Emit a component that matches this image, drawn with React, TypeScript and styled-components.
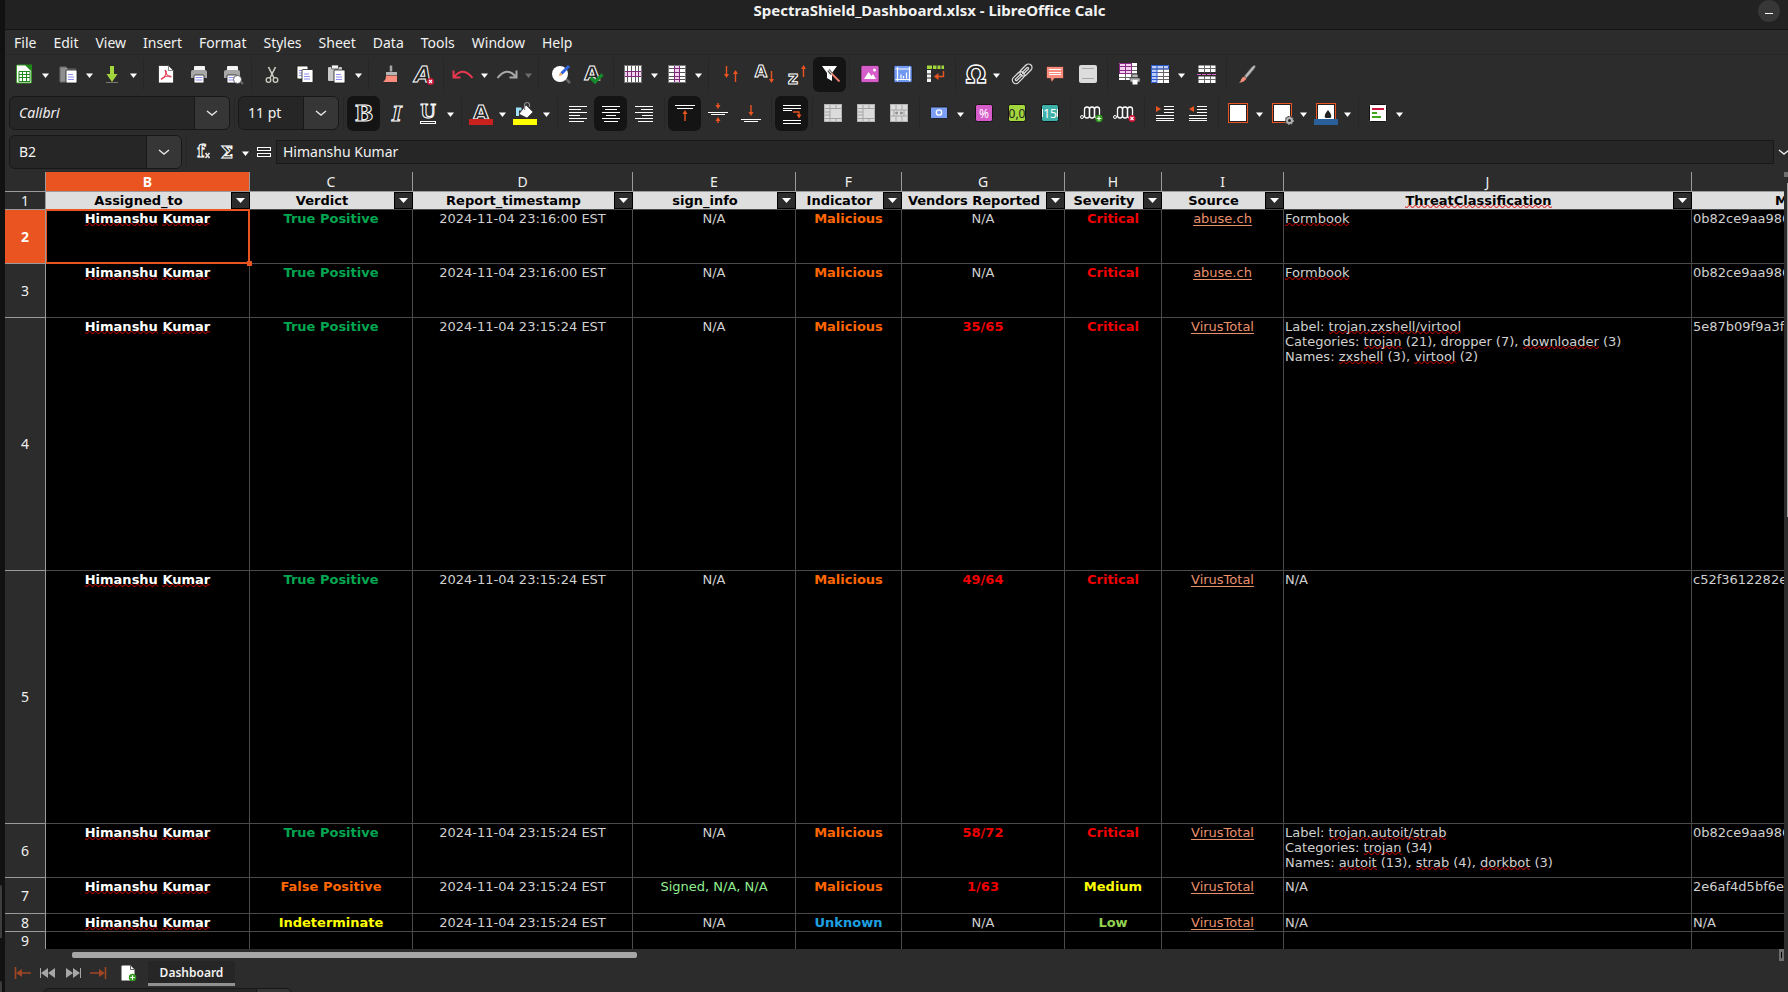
import React from "react";
import styled, { createGlobalStyle, css } from "styled-components";

const ui = `"Noto Sans", "Open Sans", sans-serif`;
const sheet = `"DejaVu Sans", Verdana, sans-serif`;
const orange = "#e95420";
const wave = `url("data:image/svg+xml,%3Csvg xmlns='http://www.w3.org/2000/svg' width='6' height='4'%3E%3Cpath d='M-1.500 0L1.500 3L4.500 0L7.500 3' fill='none' stroke='%23e00000' stroke-width='1'/%3E%3C/svg%3E")`;

const GlobalStyle = createGlobalStyle`
  * { box-sizing: border-box; }
  body { margin: 0; background: #2c2c2c; color: #f2f2f2; font: 14px/20px ${ui}; overflow-x: hidden; }
  button, input { font: inherit; color: inherit; background: none; border: 0; padding: 0; margin: 0; outline: 0; }
  svg { overflow: visible; }
`;

/* ---------- window frame ---------- */
const Desktop = styled.div`
  display: flex;
  min-height: 100vh;
`;
const Edge = styled.div`
  flex: 0 0 5px;
  background: #111;
  display: flex;
  flex-direction: column;
  justify-content: flex-end;
  gap: 43px;
`;
const EdgeItem = styled.span<{ $h: number }>`
  width: 2px;
  height: ${(p) => p.$h}px;
  background: #3d3d3d;
  border-radius: 0 3px 0 0;
`;
const Window = styled.main`
  flex: 1;
  min-width: 0;
  display: flex;
  flex-direction: column;
`;
const TitleBar = styled.header`
  height: 30px;
  display: flex;
  background: #222;
  border-bottom: 1px solid #151515;
  padding: 0 8px 0 96px;
`;
const Title = styled.h1`
  flex: 1;
  margin: 0;
  text-align: center;
  font: 700 15px/20px ${ui};
`;
const Minimise = styled.button`
  width: 22px;
  height: 22px;
  border-radius: 11px;
  background: #373737;
  display: flex;
  justify-content: center;
  &::after { content: ""; width: 8px; height: 1px; margin-top: 13px; background: #fff; }
`;
const MenuBar = styled.nav`
  height: 25px;
  display: flex;
  align-items: center;
  gap: 17px;
  padding: 2px 9px 0;
  border-bottom: 1px solid #272727;
`;
const MenuItem = styled.button`
  line-height: 20px;
`;

/* ---------- toolbars ---------- */
const Toolbar = styled.div<{ $h: number; $pad: number }>`
  height: ${(p) => p.$h}px;
  display: flex;
  align-items: center;
  padding-left: ${(p) => p.$pad}px;
`;
const Tool = styled.button<{ $on?: boolean; $narrow?: boolean; $gap?: number }>`
  flex: none;
  width: ${(p) => (p.$narrow ? 31 : 33)}px;
  height: 35px;
  margin-left: ${(p) => p.$gap || 0}px;
  border-radius: 6px;
  display: flex;
  align-items: center;
  justify-content: center;
  ${(p) => p.$on && css`background: #141414;`}
`;
const FormulaTool = styled(Tool)`
  width: 24px;
`;
const Drop = styled.button<{ $dim?: boolean }>`
  flex: none;
  width: 13px;
  height: 35px;
  display: flex;
  align-items: center;
  justify-content: center;
  color: ${(p) => (p.$dim ? "#6c6c6c" : "#fff")};
`;
const Sep = styled.span<{ $w: number }>`
  flex: none;
  width: ${(p) => p.$w}px;
  height: 32px;
  display: flex;
  justify-content: center;
  &::after { content: ""; width: 1px; background: #262626; }
`;
const Combo = styled.div<{ $w: number }>`
  flex: none;
  width: ${(p) => p.$w}px;
  height: 34px;
  display: flex;
  background: #262626;
  border: 1px solid #181818;
  border-radius: 6px;
  overflow: hidden;
`;
const ComboInput = styled.input<{ $italic?: boolean }>`
  flex: 1;
  min-width: 0;
  padding-left: 9px;
  font-style: ${(p) => (p.$italic ? "italic" : "normal")};
`;
const ComboButton = styled.button`
  flex: none;
  width: 35px;
  display: flex;
  align-items: center;
  justify-content: center;
  background: #363636;
  border-left: 1px solid #181818;
`;
const FormulaInput = styled.input`
  flex: 1;
  min-width: 0;
  height: 24px;
  padding: 0 0 1px 6px;
  background: #262626;
  border: 1px solid #181818;
`;
const Expand = styled.button`
  flex: none;
  width: 14px;
  overflow: hidden;
  display: flex;
  padding-left: 4px;
`;

/* ---------- grid ---------- */
const SheetArea = styled.div`
  display: flex;
  margin-top: 1px;
`;
const Viewport = styled.div`
  flex: 1;
  min-width: 0;
  overflow: hidden;
`;
const Grid = styled.table`
  width: 1905px;
  table-layout: fixed;
  border-collapse: separate;
  border-spacing: 0;
  font: 13px/15px ${sheet};
  color: #d0d0d0;
`;
const ColHead = styled.th<{ $sel?: boolean }>`
  height: 20px;
  padding: 0;
  font: ${(p) => (p.$sel ? 700 : 400)} 14px/18px ${ui};
  color: ${(p) => (p.$sel ? "#fff" : "#f0f0f0")};
  background: ${(p) => (p.$sel ? orange : "#2c2c2c")};
  border-right: 1px solid #9a9a9a;
  border-bottom: 1px solid #9a9a9a;
`;
const Corner = styled.td`
  background: #2c2c2c;
  border-right: 1px solid #9a9a9a;
  border-bottom: 1px solid #9a9a9a;
`;
const RowHead = styled.th<{ $sel?: boolean; $last?: boolean }>`
  padding: 0;
  font: ${(p) => (p.$sel ? 700 : 400)} 14px/16px ${ui};
  color: ${(p) => (p.$sel ? "#fff" : "#f0f0f0")};
  background: ${(p) => (p.$sel ? orange : "#2c2c2c")};
  border-right: 1px solid #9a9a9a;
  border-bottom: ${(p) => (p.$last ? 0 : 1)}px solid #9a9a9a;
`;
const Row = styled.tr<{ $h: number }>`
  height: ${(p) => p.$h}px;
`;
const FieldCell = styled.th`
  padding: 0;
  height: 18px;
  background: #dedede;
  border-bottom: 1px solid #4a4a4a;
`;
const Field = styled.div`
  display: flex;
  height: 17px;
  color: #000;
  line-height: 18px;
`;
const FieldName = styled.span`
  flex: 1;
  text-align: center;
  white-space: nowrap;
`;
const FilterButton = styled.button`
  width: 19px;
  height: 17px;
  background: #2c2c2c;
  border: 1px solid #000;
  display: flex;
  align-items: center;
  justify-content: center;
`;
const Cell = styled.td<{ $c?: string; $bold?: boolean; $left?: boolean; $last?: boolean }>`
  position: relative;
  padding: 1px 0 0 ${(p) => (p.$left ? 1 : 0)}px;
  vertical-align: top;
  white-space: nowrap;
  background: #000;
  text-align: ${(p) => (p.$left ? "left" : "center")};
  color: ${(p) => p.$c || "inherit"};
  font-weight: ${(p) => (p.$bold ? 700 : 400)};
  border-right: 1px solid #4a4a4a;
  border-bottom: ${(p) => (p.$last ? 0 : 1)}px solid #4a4a4a;
`;
const Cursor = styled.span`
  position: absolute;
  z-index: 1;
  inset: -1px -1px -1px 0;
  border: 2px solid ${orange};
  border-left-width: 1px;
  &::after {
    content: "";
    position: absolute;
    right: -4px;
    bottom: -4px;
    width: 5px;
    height: 5px;
    background: ${orange};
  }
`;
const Typo = styled.span`
  padding-bottom: 1px;
  background: ${wave} left bottom / 6px 4px repeat-x;
`;
const Link = styled.a`
  color: #e8906c;
  text-underline-offset: 2px;
`;
const VScroll = styled.div`
  flex: none;
  width: 4px;
  display: flex;
  flex-direction: column;
`;
const VSplit = styled.span`
  height: 5px;
  margin-bottom: 6px;
  background: #6e6e6e;
`;
const VThumb = styled.span`
  height: 334px;
  width: 1px;
  align-self: flex-end;
  background: #a6a6a6;
`;
const HScroll = styled.div`
  height: 12px;
  display: flex;
  justify-content: space-between;
  padding: 0 4px 0 67px;
`;
const HThumb = styled.span`
  width: 33%;
  height: 6px;
  margin-top: 3px;
  border-radius: 2px;
  background: #a6a6a6;
`;
const HSplit = styled.span`
  width: 5px;
  background: #6e6e6e;
  display: flex;
  align-items: center;
  justify-content: center;
  &::after { content: ""; width: 1px; height: 6px; background: #000; }
`;

/* ---------- sheet tabs and find bar ---------- */
const TabBar = styled.div`
  height: 27px;
  display: flex;
  align-items: flex-start;
  padding-left: 5px;
`;
const NavButton = styled.button`
  width: 25px;
  height: 24px;
  display: flex;
  align-items: center;
  justify-content: center;
`;
const AddSheet = styled(NavButton)`
  width: 24px;
  margin: 0 7px;
`;
const Tab = styled.button`
  width: 87px;
  height: 25px;
  background: #262626;
  border-bottom: 3px solid #919191;
  font: 600 12px/24px ${ui};
`;
const FindBar = styled.div`
  flex: 1 0 4px;
  height: 4px;
  overflow: hidden;
  padding-left: 38px;
`;

/* ---------- icons ---------- */
const Svg = ({ children, w = 24, h = 24 }: { children: React.ReactNode; w?: number; h?: number }) => (
  <svg width={w} height={h} viewBox={`0 0 ${w} ${h}`} fill="none" aria-hidden="true">{children}</svg>
);
const Caret = () => <Svg w={9} h={9}><path d="M1 3.500h7L4.500 8z" fill="currentColor" /></Svg>;
const Chevron = () => <Svg w={12} h={12}><path d="M1 4l5 4 5-4" stroke="#e6e6e6" strokeWidth="1.400" /></Svg>;
const Glyph = ({ x, y, s, children, it, f = "DejaVu Serif", w = 1 }: any) => (
  <text x={x} y={y} fontSize={s} fontWeight="700" fontStyle={it ? "italic" : "normal"} fontFamily={`"${f}", serif`} textAnchor="middle" stroke="#fff" strokeWidth={w} fill="#222">{children}</text>
);
const Arrow = ({ x, y1, y2 }: { x: number; y1: number; y2: number }) => {
  const d = y2 > y1 ? -4 : 4;
  return <><path d={`M${x} ${y1}V${y2 + d / 2}`} stroke={orange} strokeWidth="1.400" /><path d={`M${x - 2.5} ${y2 + d}L${x} ${y2}l2.500 ${d}z`} fill={orange} /></>;
};
const Lines = ({ rows, c = "#fff" }: { rows: number[][]; c?: string }) => (
  <path d={rows.map(([x, y, w]) => `M${x} ${y + 0.5}h${w}`).join("")} stroke={c} strokeWidth="1" />
);
const Page = ({ x = 0, y = 0 }) => (
  <g transform={`translate(${x} ${y})`}>
    <rect width="11" height="13" rx="1" fill="#fff" stroke="#1c1c1c" strokeWidth=".8" />
    <path d="M2 4.500h5M2 7h6M2 9.500h6" stroke="#8f8ff0" strokeWidth="1.200" />
  </g>
);
const Printer = () => (
  <>
    <rect x="7" y="4" width="11" height="5" rx="1" fill="#f4f4f4" />
    <path d="M4 10q0-2 2-2h12q2 0 2 2v6h-16z" fill="#a8a8a8" />
    <rect x="7" y="13" width="10" height="8" rx="1" fill="#fff" stroke="#222" strokeWidth=".8" />
    <path d="M8.500 15.500h7M8.500 18h7" stroke="#8f8ff0" strokeWidth="1.200" />
  </>
);
const Cross = ({ x, y }: { x: number; y: number }) => (
  <><circle cx={x} cy={y} r="3.500" fill="#d0163a" /><path d={`M${x - 1.5} ${y - 1.5}l3 3m0-3l-3 3`} stroke="#fff" strokeWidth="1.100" /></>
);
const Plus = ({ x, y }: { x: number; y: number }) => (
  <><circle cx={x} cy={y} r="3.700" fill="#2f9a1c" /><path d={`M${x - 2.3} ${y}h4.600M${x} ${y - 2.3}v4.600`} stroke="#fff" strokeWidth="1.200" /></>
);
const Merge = ({ mid }: { mid?: boolean }) => (
  <>
    <rect x="3" y="3" width="18" height="18" fill="#dcdcdc" />
    <path d={mid ? "M3 9h18M3 15h18M9 3v6M15 3v6M9 15v6M15 15v6M7 9v6M17 9v6" : "M3 7.500h18M3 11h6M3 14h6M3 17.500h18M9 3v18M15 3v4M15 18v3"} stroke="#a4a4a4" />
    {mid && <path d="M8 12h3m2 0h3M10 10.500v3M14 10.500v3" stroke="#8d8d8d" strokeWidth="1.300" />}
    <rect x="3.500" y="3.500" width="17" height="17" stroke="#b4b4b4" />
  </>
);
const GridBase = ({ hl }: { hl: "row" | "col" }) => (
  <>
    <rect x="3" y="3" width="18" height="18" fill="#fff" />
    {hl === "row" ? <rect x="3" y="9" width="18" height="6" fill="#f4d0f0" /> : <rect x="9" y="3" width="6" height="18" fill="#f4d0f0" />}
    <path d={hl === "row" ? "M6.500 3v18M10.500 3v18M14.500 3v18M17.500 3v18" : "M3 6.500h18M3 10.500h18M3 14.500h18M3 17.500h18"} stroke="#555" />
    <path d={hl === "row" ? "M3 9.500h18M3 14.500h18M6.500 9v6M10.500 9v6M14.500 9v6M17.500 9v6" : "M9.500 3v18M14.500 3v18M9 6.500h6M9 10.500h6M9 14.500h6M9 17.500h6"} stroke="#7c2a78" />
    <rect x="3.500" y="3.500" width="17" height="17" stroke="#777" />
  </>
);
const Indent = ({ dec }: { dec?: boolean }) => (
  <>
    <path d={dec ? "M8 5v6L3 8z" : "M3 5v6l5-3z"} fill={orange} />
    <Lines rows={[[11, 5, 10], [11, 8, 10], [11, 11, 10], [3, 14, 18], [3, 17, 18], [3, 19, 18]]} />
  </>
);
const Swatch = ({ bg, children, c }: any) => (
  <>
    <rect x="3.500" y="3.500" width="17" height="17" rx="2" fill={bg} stroke="#141414" />
    <text x="12" y="16.500" fontSize="12" textAnchor="middle" fontFamily='"Noto Sans", sans-serif' fill={c}>{children}</text>
  </>
);
const Decimal = () => (
  <>
    <circle cx="3" cy="16" r="1.500" stroke="#fff" />
    {[5.5, 10.5, 15.5].map((x) => (
      <rect key={x} x={x} y="6" width="5" height="11" rx="2.500" stroke="#fff" strokeWidth="1.300" />
    ))}
  </>
);
const Bordered = ({ children }: { children?: React.ReactNode }) => (
  <><rect x="2.500" y="2.500" width="19" height="19" fill="#222" stroke={orange} /><rect x="4" y="4" width="16" height="16" fill="#fff" />{children}</>
);

const icons: Record<string, React.ReactNode> = {
  new: <><path d="M4.500 4q0-1 1-1h8l6 6v11q0 1-1 1h-13q-1 0-1-1z" fill="#fff" stroke="#3a9a2a" /><path d="M13 2.500h7v7z" fill="#1f8a1a" /><path d="M7 9.500h11v10h-11zM7 12.500h11M7 15.500h11M10.500 9.500v10M14.500 9.500v10" stroke="#1f8a1a" /></>,
  open: <><path d="M4 5h6l2 2h8v13h-16z" fill="#8f8f8f" stroke="#6a6a6a" /><Page x={10} y={8} /></>,
  save: <><path d="M10 4h4v8h3.500L12 20l-5.500-8h3.500z" fill="#a2d63c" /><path d="M6 20.500h12" stroke="#777" /></>,
  pdf: <><path d="M4.500 3.500h10l5 5v12.500h-15z" fill="#fff" stroke="#1c1c1c" strokeWidth=".7" /><path d="M14.500 3.500v5h5" stroke="#666" strokeWidth=".8" /><path d="M11 8q2 0 .8 4Q10 17 7.500 17.500 6 17 9 15.500q4-2 7.500-1.500 2 1-.5 1Q12.500 14.500 11 8z" stroke="#e2304a" strokeWidth="1" /></>,
  print: <Printer />,
  preview: <><Printer /><path d="M19 18l4 4" stroke="#6b6b6b" strokeWidth="2" /><circle cx="17.500" cy="17.500" r="4" fill="#fff" stroke="#333" strokeWidth=".7" /></>,
  cut: <><path d="M8.500 5l5.500 11M15.500 5L10 16" stroke="#cfcfc6" strokeWidth="1.600" /><circle cx="8.500" cy="18" r="2.300" stroke="#cfcfc6" strokeWidth="1.300" /><circle cx="15.500" cy="18" r="2.300" stroke="#cfcfc6" strokeWidth="1.300" /></>,
  copy: <><Page x={4} y={4} /><Page x={9} y={7.5} /></>,
  paste: <><rect x="3" y="5" width="14" height="14" rx="1" fill="#c9c9c9" /><rect x="6.500" y="3" width="7" height="4" rx="1" fill="#f4f4f4" stroke="#333" strokeWidth=".8" /><Page x={9} y={8} /></>,
  clone: <><path d="M12 3.500v6" stroke="#a6a6a6" strokeWidth="2.500" /><path d="M7 13v-3h11v3z" fill="#b5b5b5" /><path d="M7 13.500h11V20H4q3-2 3-6.500z" fill="#fc8d7c" /></>,
  clear: <><Glyph x={11} y={20} s={22} it f="DejaVu Sans">A</Glyph><Cross x={18.5} y={19.5} /></>,
  undo: <path d="M2.500 8.500v7h7M3 15Q12 4 21.500 16" stroke="#e8384f" strokeWidth="2" />,
  redo: <path d="M21.500 8.500v7h-7M21 15Q12 4 2.500 16" stroke="#a8a8a8" strokeWidth="2" />,
  find: <><path d="M17 17l4 4" stroke="#666" strokeWidth="2.500" /><circle cx="11" cy="12" r="8" fill="#fff" /><path d="M12.500 11.500L20 4" stroke="#2f62dc" strokeWidth="3" /><path d="M10 14l1-3.500 2.500 2.500z" fill="#f09a50" /></>,
  spell: <><Glyph x={10} y={18} s={20} f="DejaVu Sans">A</Glyph><path d="M8.500 15.500l4.500 4.500 7.500-7.500" stroke="#148a2c" strokeWidth="3.200" /></>,
  rows: <GridBase hl="row" />,
  cols: <GridBase hl="col" />,
  sort: <><Arrow x={7.5} y1={4} y2={16} /><Arrow x={16.5} y1={20} y2={8} /></>,
  asc: <><Glyph x={9} y={14.5} s={16} f="DejaVu Sans">A</Glyph><Arrow x={19.5} y1={9} y2={21} /></>,
  desc: <><Glyph x={8} y={21.5} s={18} f="DejaVu Sans">z</Glyph><Arrow x={18.5} y1={15} y2={3} /></>,
  filter: <><path d="M4 4h15l-5 7v8l-5-3v-5z" fill="#fff" /><path d="M10.500 8l3 4" stroke="#555" strokeWidth="3" /><path d="M10.500 8l3.500 4" stroke="#fff" strokeWidth="1" /><path d="M13.500 11.500l8 8" stroke="#f08070" strokeWidth="1.800" /></>,
  image: <><rect x="3" y="3.500" width="18" height="17" rx="1.500" fill="#d65cca" stroke="#141414" strokeWidth=".6" /><path d="M6 17l4.500-7 3 4 1.500-2 3 5z" fill="#fff" /><circle cx="16.500" cy="8" r="1.500" fill="#fff" /></>,
  chart: <><rect x="3" y="3.500" width="18" height="17" rx="1.500" fill="#7199f2" stroke="#141414" strokeWidth=".6" /><path d="M4.500 7h15M4.500 17.500h15M6.500 5v14M18.500 5v14M10 12.500v4M12.500 14v2.500M15.500 10.500v6" stroke="#fff" strokeWidth="1.200" /></>,
  pivot: <><path d="M3 3.500h5v3.500h-5zM9 3.500h3.500v3.500h-3.500zM13.500 3.500h3v3.500h-3zM17.500 3.500h2.500v3.500h-2.500z" fill="#a2d63c" /><path d="M3 8h4v3.500h-4zM3 12.500h4v3h-4zM3 16.500h4v3.500h-4z" fill="#f2f2f2" /><path d="M19.500 9v5.500H13" stroke={orange} strokeWidth="1.400" /><path d="M14.500 11v7l-4.500-3.500z" fill={orange} /></>,
  omega: <Glyph x={13} y={21} s={24} f="DejaVu Sans" w={1.3}>Ω</Glyph>,
  link: <g stroke="#dcdcdc" strokeWidth="1.300"><rect x="-6.500" y="-3.500" width="14" height="7" rx="3.500" transform="translate(8 16) rotate(-45)" /><rect x="-4" y="-1" width="8" height="2" rx="1" transform="translate(8.500 15.500) rotate(-45)" /><rect x="-7" y="-3.500" width="14" height="7" rx="3.500" transform="translate(16 8) rotate(-45)" /><rect x="-4" y="-1" width="8" height="2" rx="1" transform="translate(15.500 8.500) rotate(-45)" /></g>,
  comment: <><path d="M3.500 4.500h17v12h-9l-3 4-1-4h-4z" fill="#fc8d7c" stroke="#1c1c1c" strokeWidth=".6" /><Lines rows={[[6, 7, 12], [6, 10, 12], [6, 12, 12]]} /></>,
  header: <><rect x="3" y="3" width="18" height="18" rx="2" fill="#dcdcdc" /><Lines rows={[[6, 6, 12], [6, 16, 12]]} c="#a8a8a8" /></>,
  range: <><path d="M3 1h18v17h-18z" fill="#fff" /><path d="M3 1h12v10h-12z" fill="#f4d0f0" /><path d="M3 4.500h18M3 8.500h18M3 11.500h18M3 15.500h18M9.500 1v17M15.500 1v17" stroke="#666" /><path d="M3.500 1.500h12v10h-12zM3.500 4.500h12M3.500 8.500h12M9.500 1v10" stroke="#8a2a84" /><path d="M14 16h10v4h-10zM16 12.500h6v3h-6z" fill="#b5b5b5" stroke="#333" strokeWidth=".6" /><rect x="16.500" y="18" width="5" height="4.500" fill="#fff" /></>,
  freeze: <><path d="M3 3h18v18h-18z" fill="#fff" /><path d="M3 3h6v18h-6zM9 3h12v4h-12z" fill="#b9ccfa" /><path d="M3 7h18M3 10.500h18M3 14.500h18M3 17.500h18M15.500 3v18" stroke="#666" /><path d="M3.500 3.500h17v3.500h-17zM3.500 3.500h5.500v17h-5.500zM3 10.500h6M3 14.500h6M3 17.500h6" stroke="#2f5bd0" /></>,
  split: <><path d="M3.500 3.500h17v6.500h-17zM3.500 14.500h17v6.500h-17z" fill="#fff" /><path d="M3 6.500h18M3 17.500h18M9.500 3v7.500M15.500 3v7.500M9.500 14v7M15.500 14v7" stroke="#666" /><path d="M2 12.500h20" stroke="#e060c8" strokeWidth="1.200" strokeDasharray="4 1" /></>,
  draw: <><path d="M20 3.500q1 1-1 3.500l-7.500 9-2-2 7-8.500q2-2.500 3.500-2z" fill="#b9b9b9" stroke="#666" strokeWidth=".6" /><path d="M9.500 14.500l2 2Q9.500 20 4 21q2-2 2-3.500 1-2.500 3.500-3z" fill="#f08d7c" /></>,
  bold: <Glyph x={12} y={20} s={22}>B</Glyph>,
  italic: <Glyph x={12} y={20} s={21} it>I</Glyph>,
  underline: <><Glyph x={11} y={17} s={18}>U</Glyph><rect x="3.500" y="20.500" width="15" height="2" stroke="#fff" /></>,
  color: <><Glyph x={12} y={17.5} s={20} f="DejaVu Sans">A</Glyph><path d="M0 18h24v6h-24z" fill="#c9211e" /></>,
  highlight: <><path d="M4.500 15V8h4" stroke="#9fe0f8" strokeWidth="3" /><path d="M13 4l7 7-6 6-8-4z" fill="#fff" stroke="#222" strokeWidth=".6" /><path d="M11.500 9V4q0-2.500 2.500-2.500T16.500 4v2" stroke="#8a8a8a" strokeWidth="1.200" /><path d="M0 18h24v6h-24z" fill="#ff0" /></>,
  left: <Lines rows={[[3, 5, 18], [3, 8, 12], [3, 11, 18], [3, 14, 11], [3, 17, 18], [3, 20, 15]]} />,
  center: <Lines rows={[[3, 5, 18], [6, 8, 12], [3, 11, 18], [7, 14, 10], [3, 17, 18], [5, 20, 14]]} />,
  right: <Lines rows={[[3, 5, 18], [9, 8, 12], [3, 11, 18], [10, 14, 11], [3, 17, 18], [6, 20, 15]]} />,
  top: <><Lines rows={[[2, 4, 20], [4, 7, 16]]} /><Arrow x={12} y1={20} y2={9} /></>,
  middle: <><Arrow x={12} y1={2} y2={8} /><Lines rows={[[2, 11, 20], [5, 13, 14]]} /><Arrow x={12} y1={22} y2={16} /></>,
  bottom: <><Arrow x={12} y1={4} y2={15} /><Lines rows={[[2, 18, 20], [5, 20, 14]]} /></>,
  wrap: <><Lines rows={[[3, 4, 18], [3, 7, 18], [3, 9, 9], [3, 19, 18], [3, 22, 18]]} /><path d="M13 11h6v4" stroke={orange} strokeWidth="1.300" /><path d="M16.500 13.500h5L19 17.500z" fill={orange} /></>,
  merge1: <Merge />,
  merge2: <Merge />,
  merge3: <Merge mid />,
  currency: <><rect x="3.500" y="6" width="17" height="11.500" rx="1" fill="#7c9ff5" stroke="#141414" strokeWidth=".8" /><circle cx="12" cy="11.500" r="2.700" stroke="#fff" strokeWidth="1.300" /></>,
  percent: <Swatch bg="#d65cca" c="#fff">%</Swatch>,
  number: <Swatch bg="#a2d63c" c="#222">0,0</Swatch>,
  date: <><Swatch bg="#3fb0a8" c="#fff">15</Swatch><path d="M4.500 8v8M19.500 8v8" stroke="#fff" /></>,
  decAdd: <><Decimal /><Plus x={20} y={17.5} /></>,
  decDel: <><Decimal /><Cross x={20} y={17.5} /></>,
  indent: <Indent />,
  outdent: <Indent dec />,
  border: <Bordered />,
  borderStyle: <><Bordered /><circle cx="19.500" cy="19.500" r="4.500" fill="#2c2c2c" /><circle cx="19.500" cy="19.500" r="2.500" stroke="#b5b5b5" strokeWidth="2" /><circle cx="19.500" cy="19.500" r="4" stroke="#b5b5b5" strokeDasharray="1.500 1.500" /></>,
  borderColor: <Bordered><path d="M14 9q5 6 2.500 8h-5Q9 15 14 9z" fill="#222" /><path d="M0 18h24v6h-24z" fill="#2a6099" /></Bordered>,
  cond: <><rect x="3.500" y="3.500" width="17" height="17" rx="1" fill="#fff" stroke="#141414" /><path d="M6 8h12" stroke="#c9143a" strokeWidth="2" /><path d="M6 12h5M6 16h9" stroke="#3fa51c" strokeWidth="2" /></>,
  fx: <><Glyph x={10} y={17} s={17}>f</Glyph><path d="M14.500 13l4 5m0-5l-4 5" stroke="#ddd" strokeWidth="1.800" /></>,
  sum: <Glyph x={12} y={18} s={17}>Σ</Glyph>,
  equals: <><rect x="5.500" y="7.500" width="13" height="3" stroke="#fff" /><rect x="5.500" y="13.500" width="13" height="3" stroke="#fff" /></>,
  first: <><path d="M4.500 6v12M8 12h12" stroke="#a04524" strokeWidth="1.600" /><path d="M11 8v8l-6-4z" fill="#a04524" /></>,
  last: <><path d="M19.500 6v12M4 12h12" stroke="#a04524" strokeWidth="1.600" /><path d="M13 8v8l6-4z" fill="#a04524" /></>,
  prev: <path d="M4 7h1v10h-1zM12 7v10l-7-5zM19 7v10l-7-5z" fill="#a6a6a6" />,
  next: <path d="M19 7h1v10h-1zM5 7v10l7-5zM12 7v10l7-5z" fill="#a6a6a6" />,
  addSheet: <><path d="M4.500 5.500q0-1 1-1h8l4 4v11h-13z" fill="#fff" /><path d="M13.500 4.500v4h4" stroke="#666" /><Plus x={15.5} y={16.5} /></>,
};

type Item = [string, string, ("drop" | "dim" | "on")?];
const standard: Item[][] = [
  [["new", "New", "drop"], ["open", "Open", "drop"], ["save", "Save", "drop"]],
  [["pdf", "Export as PDF"], ["print", "Print"], ["preview", "Print Preview"]],
  [["cut", "Cut"], ["copy", "Copy"], ["paste", "Paste", "drop"]],
  [["clone", "Clone Formatting"], ["clear", "Clear Formatting"]],
  [["undo", "Undo", "drop"], ["redo", "Redo", "dim"]],
  [["find", "Find and Replace"], ["spell", "Spelling"]],
  [["rows", "Row", "drop"], ["cols", "Column", "drop"]],
  [["sort", "Sort"], ["asc", "Sort Ascending"], ["desc", "Sort Descending"], ["filter", "AutoFilter", "on"]],
  [["image", "Insert Image"], ["chart", "Insert Chart"], ["pivot", "Pivot Table"]],
  [["omega", "Special Character", "drop"], ["link", "Hyperlink"], ["comment", "Comment"], ["header", "Headers and Footers"]],
  [["range", "Print Area"], ["freeze", "Freeze", "drop"], ["split", "Split Window"]],
  [["draw", "Draw Functions"]],
];
const formatting: Item[][] = [
  [["bold", "Bold", "on"], ["italic", "Italic"], ["underline", "Underline", "drop"]],
  [["color", "Font Color", "drop"], ["highlight", "Background", "drop"]],
  [["left", "Align Left"], ["center", "Center", "on"], ["right", "Align Right"]],
  [["top", "Align Top", "on"], ["middle", "Center Vertically"], ["bottom", "Align Bottom"]],
  [["wrap", "Wrap Text", "on"]],
  [["merge1", "Merge and Center"], ["merge2", "Merge Cells"], ["merge3", "Unmerge Cells"]],
  [["currency", "Currency", "drop"], ["percent", "Percent"], ["number", "Number"], ["date", "Date"]],
  [["decAdd", "Add Decimal Place"], ["decDel", "Delete Decimal Place"]],
  [["indent", "Increase Indent"], ["outdent", "Decrease Indent"]],
  [["border", "Borders", "drop"], ["borderStyle", "Border Style", "drop"], ["borderColor", "Border Color", "drop"]],
  [["cond", "Conditional Formatting", "drop"]],
];

function Tools({ groups, sep, gap }: { groups: Item[][]; sep: number; gap: number }) {
  let afterDrop = false;
  return (
    <>
      {groups.map((group, g) => (
        <React.Fragment key={g}>
          {g > 0 && <Sep $w={sep} />}
          {group.map(([id, label, kind]) => {
            const drop = kind === "drop" || kind === "dim";
            const lead = afterDrop && !drop ? gap : 0;
            afterDrop = drop;
            return (
              <React.Fragment key={id}>
                <Tool aria-label={label} $narrow={drop} $on={kind === "on"} $gap={lead}><Svg>{icons[id]}</Svg></Tool>
                {drop && <Drop aria-label={`${label} options`} $dim={kind === "dim"}><Caret /></Drop>}
              </React.Fragment>
            );
          })}
        </React.Fragment>
      ))}
    </>
  );
}

/* ---------- data ---------- */
const menus = ["File", "Edit", "View", "Insert", "Format", "Styles", "Sheet", "Data", "Tools", "Window", "Help"];
const columns: [string, number, string][] = [
  ["B", 204, "Assigned_to"], ["C", 163, "Verdict"], ["D", 220, "Report_timestamp"], ["E", 163, "sign_info"],
  ["F", 106, "Indicator"], ["G", 163, "Vendors Reported"], ["H", 97, "Severity"], ["I", 122, "Source"],
  ["J", 408, "~ThreatClassification~"], ["", 218, "MD5"],
];
const colors: Record<string, string> = {
  "True Positive": "#00a650", "False Positive": "#ff6600", Indeterminate: "#ffff00", Malicious: "#ff6600",
  Unknown: "#1ea0e0", Critical: "#f00000", Medium: "#ffff00", Low: "#92d050", "Signed, N/A, N/A": "#90ee90",
};
const records = [
  { n: 2, h: 54, v: ["True Positive", "2024-11-04 23:16:00 EST", "N/A", "Malicious", "N/A", "Critical", "abuse.ch", "~Formbook~", "0b82ce9aa986"] },
  { n: 3, h: 54, v: ["True Positive", "2024-11-04 23:16:00 EST", "N/A", "Malicious", "N/A", "Critical", "abuse.ch", "~Formbook~", "0b82ce9aa986"] },
  { n: 4, h: 253, v: ["True Positive", "2024-11-04 23:15:24 EST", "N/A", "Malicious", "35/65", "Critical", "VirusTotal", "Label: ~trojan.zxshell/virtool~\nCategories: ~trojan~ (21), dropper (7), ~downloader~ (3)\nNames: ~zxshell~ (3), ~virtool~ (2)", "5e87b09f9a3f"] },
  { n: 5, h: 253, v: ["True Positive", "2024-11-04 23:15:24 EST", "N/A", "Malicious", "49/64", "Critical", "VirusTotal", "N/A", "c52f3612282e"] },
  { n: 6, h: 54, v: ["True Positive", "2024-11-04 23:15:24 EST", "N/A", "Malicious", "58/72", "Critical", "VirusTotal", "Label: ~trojan.autoit/strab~\nCategories: ~trojan~ (34)\nNames: ~autoit~ (13), ~strab~ (4), ~dorkbot~ (3)", "0b82ce9aa986"] },
  { n: 7, h: 36, v: ["False Positive", "2024-11-04 23:15:24 EST", "Signed, N/A, N/A", "Malicious", "1/63", "Medium", "VirusTotal", "N/A", "2e6af4d5bf6e"] },
  { n: 8, h: 18, v: ["Indeterminate", "2024-11-04 23:15:24 EST", "N/A", "Unknown", "N/A", "Low", "VirusTotal", "N/A", "N/A"] },
];

/* Words between tildes are flagged by the spell checker. */
const rich = (text: string) =>
  text.split("\n").map((line, l) => (
    <React.Fragment key={l}>
      {l > 0 && <br />}
      {line.split("~").map((part, i) => (i % 2 ? <Typo key={i}>{part}</Typo> : part))}
    </React.Fragment>
  ));

function Value({ value, col }: { value: string; col: number }) {
  const vendors = /^\d+\/\d+$/.test(value);
  const bold = vendors || [0, 3, 5].includes(col);
  return (
    <Cell $c={vendors ? "#f00000" : colors[value]} $bold={bold} $left={col > 6}>
      {col === 6 ? <Link href={`#${value}`}>{value}</Link> : rich(value)}
    </Cell>
  );
}

export default function App() {
  return (
    <Desktop>
      <GlobalStyle />
      <Edge><EdgeItem $h={53} /><EdgeItem $h={11} /></Edge>
      <Window>
        <TitleBar>
          <Title>SpectraShield_Dashboard.xlsx - LibreOffice Calc</Title>
          <Minimise aria-label="Minimise" />
        </TitleBar>
        <MenuBar>{menus.map((m) => <MenuItem key={m}>{m}</MenuItem>)}</MenuBar>
        <Toolbar $h={38} $pad={3}><Tools groups={standard} sep={7} gap={2} /></Toolbar>
        <Toolbar $h={40} $pad={4}>
          <Combo $w={221}><ComboInput aria-label="Font name" defaultValue="Calibri" $italic /><ComboButton aria-label="Font list"><Chevron /></ComboButton></Combo>
          <Sep $w={8} />
          <Combo $w={101}><ComboInput aria-label="Font size" defaultValue="11 pt" /><ComboButton aria-label="Size list"><Chevron /></ComboButton></Combo>
          <Sep $w={8} />
          <Tools groups={formatting} sep={8} gap={0} />
        </Toolbar>
        <Toolbar $h={38} $pad={4}>
          <Combo $w={173}><ComboInput aria-label="Name box" defaultValue="B2" /><ComboButton aria-label="Name list"><Chevron /></ComboButton></Combo>
          <Sep $w={9} />
          <FormulaTool aria-label="Function Wizard"><Svg>{icons.fx}</Svg></FormulaTool>
          <FormulaTool aria-label="Sum"><Svg>{icons.sum}</Svg></FormulaTool>
          <Drop aria-label="Select Function"><Caret /></Drop>
          <FormulaTool aria-label="Formula"><Svg>{icons.equals}</Svg></FormulaTool>
          <FormulaInput aria-label="Input line" defaultValue="Himanshu Kumar" />
          <Expand aria-label="Expand formula bar"><Chevron /></Expand>
        </Toolbar>
        <SheetArea>
          <Viewport>
            <Grid>
              <colgroup>
                <col style={{ width: 41 }} />
                {columns.map(([c, w]) => <col key={c} style={{ width: w }} />)}
              </colgroup>
              <thead>
                <tr><Corner />{columns.map(([c]) => <ColHead key={c} scope="col" $sel={c === "B"}>{c}</ColHead>)}</tr>
              </thead>
              <tbody>
                <Row $h={18}>
                  <RowHead scope="row">1</RowHead>
                  {columns.map(([c, , name]) => (
                    <FieldCell key={c}>
                      <Field>
                        <FieldName>{rich(name)}</FieldName>
                        <FilterButton aria-label={`Filter ${c}`}><Svg w={9} h={5}><path d="M0 0h9L4.500 5z" fill="#fff" /></Svg></FilterButton>
                      </Field>
                    </FieldCell>
                  ))}
                </Row>
                {records.map((r) => (
                  <Row key={r.n} $h={r.h}>
                    <RowHead scope="row" $sel={r.n === 2}>{r.n}</RowHead>
                    <Cell $bold $c="#fff">{rich("~Himanshu~ ~Kumar~")}{r.n === 2 && <Cursor />}</Cell>
                    {r.v.map((value, i) => <Value key={i} value={value} col={i} />)}
                  </Row>
                ))}
                <Row $h={17}>
                  <RowHead scope="row" $last>9</RowHead>
                  {columns.map(([c]) => <Cell key={c} $last />)}
                </Row>
              </tbody>
            </Grid>
          </Viewport>
          <VScroll><VSplit /><VThumb /></VScroll>
        </SheetArea>
        <HScroll><HThumb /><HSplit /></HScroll>
        <TabBar>
          {[["first", "First sheet"], ["prev", "Previous sheet"], ["next", "Next sheet"], ["last", "Last sheet"]].map(([id, label]) => (
            <NavButton key={id} aria-label={label}><Svg>{icons[id]}</Svg></NavButton>
          ))}
          <AddSheet aria-label="Add sheet"><Svg>{icons.addSheet}</Svg></AddSheet>
          <Tab>Dashboard</Tab>
        </TabBar>
        <FindBar><Combo $w={249}><ComboInput aria-label="Find" /><ComboButton aria-label="Find history" /></Combo></FindBar>
      </Window>
    </Desktop>
  );
}
